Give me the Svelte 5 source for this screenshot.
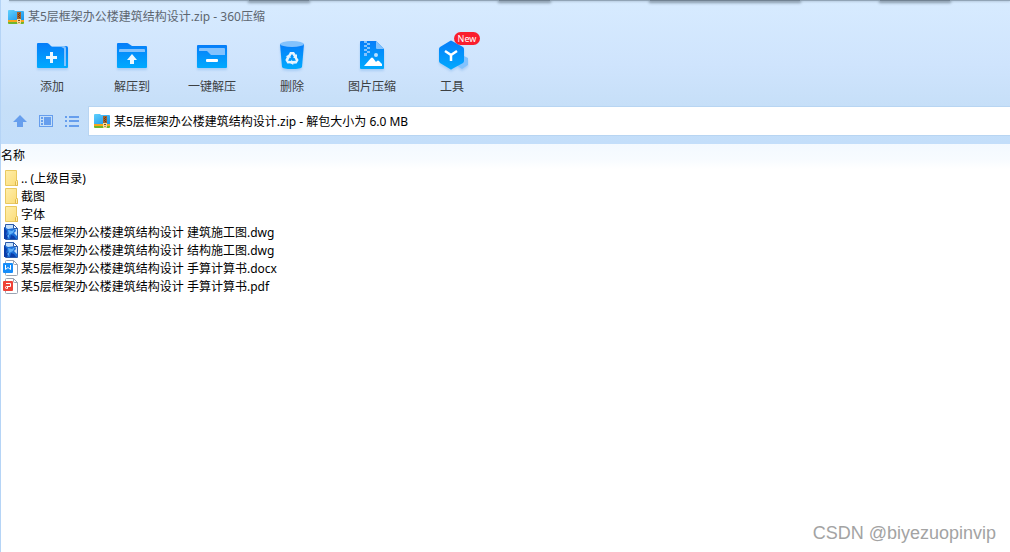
<script>
	let path = '某5层框架办公楼建筑结构设计.zip - 解包大小为 6.0 MB';

	const tools = [
		{ id: 'add', label: '添加' },
		{ id: 'extract', label: '解压到' },
		{ id: 'quick', label: '一键解压' },
		{ id: 'delete', label: '删除' },
		{ id: 'image', label: '图片压缩' },
		{ id: 'more', label: '工具', badge: 'New' }
	];

	const files = [
		{ type: 'folder', name: '.. (上级目录)' },
		{ type: 'folder', name: '截图' },
		{ type: 'folder', name: '字体' },
		{ type: 'dwg', name: '某5层框架办公楼建筑结构设计 建筑施工图.dwg' },
		{ type: 'dwg', name: '某5层框架办公楼建筑结构设计 结构施工图.dwg' },
		{ type: 'docx', name: '某5层框架办公楼建筑结构设计 手算计算书.docx' },
		{ type: 'pdf', name: '某5层框架办公楼建筑结构设计 手算计算书.pdf' }
	];
</script>

<svg class="defs" width="0" height="0" aria-hidden="true">
	<defs>
		<linearGradient id="blue" x1="0" y1="0" x2="0" y2="1">
			<stop offset="0" stop-color="#067df9" />
			<stop offset="1" stop-color="#01aafe" />
		</linearGradient>
		<linearGradient id="zipBlue" x1="0" y1="0" x2="1" y2="1">
			<stop offset="0" stop-color="#5fd0fc" />
			<stop offset="1" stop-color="#1590ec" />
		</linearGradient>
		<linearGradient id="paper" x1="0" y1="0" x2="1" y2="1">
			<stop offset="0" stop-color="#ffeeaa" />
			<stop offset="1" stop-color="#fbdc77" />
		</linearGradient>
		<symbol id="zip" viewBox="0 0 16 14">
			<path d="M0 1q0-1 1-1h5l1 1h8q1 0 1 1v9H0z" fill="url(#zipBlue)" />
			<path d="M0 10h16v2H0z" fill="#f8a51b" />
			<path d="M0 12h16v1q0 1-1 1H1q-1 0-1-1z" fill="#6fb52c" />
			<path d="M9 2h4v8H9z" fill="#a3622f" />
			<path d="M11 3h1v1h-1zM10 4h1v1h-1zM11 5h1v1h-1zM10 6h1v1h-1zM11 7h1v1h-1z" fill="#6b3b18" />
			<path d="M9 9h4v4q0 1-1 1h-2q-1 0-1-1z" fill="#f7dc9a" />
			<path d="M10 10h2v1h-2zM10.5 12h1v1h-1z" fill="#7a4a1e" />
		</symbol>
	</defs>
</svg>

<div class="window">
	<div class="edge">
		<i></i><i></i><i></i><i></i>
	</div>

	<header>
		<div class="title">
			<svg width="16" height="14"><use href="#zip" /></svg>
			<span>某5层框架办公楼建筑结构设计.zip - 360压缩</span>
		</div>

		<nav class="toolbar">
			{#each tools as tool}
				<button class="tool">
					<svg width="32" height="32" viewBox="0 0 32 32">
						{#if tool.id === 'add'}
							<path d="M14 5h16q2 0 2 2v19q0 1-1 1H14z" fill="url(#blue)" />
							<path d="M14 5h14q2 0 2 2v18h-2V8q0-1-1-1H14z" fill="#83c2fd" />
							<path d="M1 3q0-1 1-1h9q1 0 2 1l3 3h9q2 0 2 2v19H2q-1 0-1-1z" fill="url(#blue)" />
							<path d="M14 11h3v4h4v3h-4v4h-3v-4h-4v-3h4z" fill="#fff" opacity=".93" />
						{:else if tool.id === 'extract'}
							<path d="M1 3q0-1 1-1h9q1 0 2 1l3 2h14q1 0 1 1v20q0 1-1 1H2q-1 0-1-1z" fill="url(#blue)" />
							<path d="M3 11V9q0-1 1-1h24q1 0 1 1v2z" fill="#83c2fd" />
							<path d="M16 13l5 6h-3v4h-4v-4h-3z" fill="#fff" opacity=".93" />
						{:else if tool.id === 'quick'}
							<rect x="1" y="4" width="30" height="23" rx="1" fill="url(#blue)" />
							<path d="M3 10V8q0-1 1-1h24q1 0 1 1v6H15l-4-4z" fill="#83c2fd" />
							<rect x="10" y="18" width="12" height="3" rx="1" fill="#fff" />
						{:else if tool.id === 'delete'}
							<path d="M4 3h24l-2 23q-1 2-10 2T6 26z" fill="url(#blue)" />
							<ellipse cx="16" cy="3" rx="12" ry="3" fill="#83c2fd" />
							<g id="recycle" fill="#e6f4ff">
								<path d="M14 11h4l2 3 1-1v4h-4l1-1-2-3-2 3-2-1z" />
								<path d="M14 11h4l2 3 1-1v4h-4l1-1-2-3-2 3-2-1z" transform="rotate(120 16 17.500)" />
								<path d="M14 11h4l2 3 1-1v4h-4l1-1-2-3-2 3-2-1z" transform="rotate(240 16 17.500)" />
							</g>
						{:else if tool.id === 'image'}
							<path d="M4 1q0-1 1-1h15l8 8v19q0 1-1 1H5q-1 0-1-1z" fill="url(#blue)" />
							<path d="M20 0l8 8h-7q-1 0-1-1z" fill="#83c2fd" />
							<path d="M8 0h3v2H8zM11 2h3v2h-3zM8 4h3v2H8zM11 6h3v2h-3zM8 8h3v2H8zM11 10h3v2h-3zM8 12h3v3H8z" fill="#83c2fd" />
							<circle cx="20" cy="14" r="2" fill="#b9e0ff" />
							<path d="M8 25l7-8q1-1 2 0l3 4 1-1q1-1 2 0l3 3v2z" fill="#fff" />
						{:else}
							<path d="M26 14l6 3v7l-6 4-6-4v-7z" fill="#83c2fd" />
							<path d="M14 0q1-1 2 0l11 6q1 1 1 2v12q0 1-1 2l-11 6q-1 1-2 0L4 22q-1-1-1-2V8q0-1 1-2z" fill="url(#blue)" />
							<path d="M9 10l6 4 6-4M15 14v6" fill="none" stroke="#fff" stroke-width="2.5" />
						{/if}
					</svg>
					<span>{tool.label}</span>
					{#if tool.badge}
						<b class="badge">{tool.badge}</b>
					{/if}
				</button>
			{/each}
		</nav>

		<div class="address">
			<div class="nav">
				<button aria-label="上级目录">
					<svg width="14" height="14" fill="#669eed"><path d="M7 1l7 7h-4v5H4V8H0z" /></svg>
				</button>
				<button aria-label="预览">
					<svg width="14" height="14" fill="#669eed">
						<path d="M0 1h14v12H0zm1 1v10h12V2z" fill-rule="evenodd" />
						<path d="M2 3h2v2H2zM2 6h2v2H2zM2 9h2v2H2zM5 3h7v8H5z" />
					</svg>
				</button>
				<button aria-label="列表">
					<svg width="14" height="14" fill="#669eed">
						<path d="M0 2h2v2H0zM0 6h2v2H0zM0 11h2v2H0zM4 2h10v2H4zM4 6h10v2H4zM4 11h10v2H4z" />
					</svg>
				</button>
			</div>
			<label class="path">
				<svg width="16" height="14"><use href="#zip" /></svg>
				<input type="text" aria-label="路径" bind:value={path}>
			</label>
		</div>
	</header>

	<table>
		<thead>
			<tr><th>名称</th></tr>
		</thead>
		<tbody>
			{#each files as file}
				<tr>
					<td>
						<div class="file">
							<svg width="16" height="16" viewBox="0 0 16 16">
								{#if file.type === 'folder'}
									<path d="M2.5.5h11v10h1v5h-12z" fill="url(#paper)" stroke="#e9c960" />
									<path d="M12.5 15.5v-4l1-1 1 1v4z" fill="#ffeeaa" stroke="#e0b94c" />
								{:else if file.type === 'dwg'}
									<path d="M2.5.5h8l4 4v11h-12z" fill="#c5e0fb" stroke="#2c5cab" />
									<path d="M1 3l4 2 7-1 1 3-2 2 3 3v3H1z" fill="#1b6fd8" />
									<path d="M1 3l3 4-1 4 3-1-2 5H1zM8 11l3 1 2 3H7z" fill="#0a3da8" />
									<path d="M5 6l4 1 3-2-2 4-4 2zM4 12l2-2v4z" fill="#5fb0fa" />
									<path d="M10.5.5v4h4z" fill="#fff" stroke="#2c5cab" />
								{:else}
									<path d="M2.5 1.5q0-1 1-1h7l4 4v10q0 1-1 1h-10q-1 0-1-1z" fill="#fff" stroke="#9aa3b2" />
									<path d="M10.5.5v3q0 1 1 1h3" fill="none" stroke="#9aa3b2" />
									{#if file.type === 'docx'}
										<rect y="3" width="10" height="10" rx="1" fill="#168dfa" />
										<path d="M2.5 5v4.500L5 7.500l2.500 2V5" fill="none" stroke="#fff" />
									{:else}
										<rect y="3" width="10" height="10" rx="1" fill="#ee4238" />
										<path d="M3 5.500h4.500v3h-4q-1 0-1 1t1 1h1v-2" fill="none" stroke="#fff" />
									{/if}
								{/if}
							</svg>
							<span>{file.name}</span>
						</div>
					</td>
				</tr>
			{/each}
		</tbody>
	</table>

	<div class="watermark">CSDN @biyezuopinvip</div>
</div>

<style>
	:global(body) {
		margin: 0;
		background: #fff;
	}

	.defs {
		position: absolute;
	}

	.window {
		position: relative;
		box-sizing: border-box;
		min-height: 100vh;
		border-left: 1px solid #b5d4f6;
		font: 12px/18px "Noto Sans", "Noto Sans CJK SC", sans-serif;
		color: #000;
	}

	svg {
		flex: none;
		overflow: visible;
	}

	button {
		padding: 0;
		border: 0;
		background: none;
		font: inherit;
		color: inherit;
	}

	/* shadow of the window behind, along the top */
	.edge {
		position: absolute;
		top: 0;
		left: 8px;
		right: 0;
		height: 1px;
		background: #91a4b6;
		box-shadow: 0 1px 2px #a9bdd0;
	}

	.edge i {
		position: absolute;
		top: 0;
		height: 1px;
		background: #718292;
		box-shadow: 0 1px 3px 1px #8798a9;
	}

	.edge i:nth-child(1) { left: 24%; width: 6%; }
	.edge i:nth-child(2) { left: 49%; width: 5%; }
	.edge i:nth-child(3) { left: 64%; width: 15%; }
	.edge i:nth-child(4) { left: 87%; width: 7%; }

	header {
		padding-bottom: 8px;
		background: linear-gradient(#d7ebff, #cfe4fd 45%, #c6dff8 74%, #c3defa);
	}

	.title {
		display: flex;
		box-sizing: border-box;
		align-items: center;
		gap: 4px;
		height: 32px;
		padding: 2px 0 0 7px;
		color: #5d6670;
	}

	.toolbar {
		display: flex;
		height: 74px;
		padding-left: 11px;
	}

	.tool {
		position: relative;
		display: flex;
		flex-direction: column;
		align-items: center;
		gap: 4px;
		width: 80px;
		padding-top: 9px;
		color: #3c4043;
	}

	.tool svg {
		filter: drop-shadow(0 2px 1px #a9cdf5);
	}

	.tool span,
	.file span,
	.path input {
		padding: 2px 0 0;
		line-height: 16px;
	}

	.badge {
		position: absolute;
		top: 0;
		left: 42px;
		width: 26px;
		border-radius: 7px;
		background: #fa1e2d;
		color: #fff;
		font-weight: 400;
		font-size: 9px;
		line-height: 13px;
		text-align: center;
	}

	.address {
		display: flex;
		align-items: center;
	}

	.nav {
		display: flex;
		gap: 12px;
		width: 75px;
		padding-left: 12px;
	}

	.nav button {
		display: flex;
	}

	.path {
		display: flex;
		flex: 1;
		align-items: center;
		gap: 4px;
		height: 28px;
		padding-left: 5px;
		border: 1px solid #b8d5f2;
		border-right: 0;
		background: #fff;
	}

	.path input {
		flex: 1;
		min-width: 0;
		border: 0;
		outline: 0;
		background: none;
		font: inherit;
		color: #000;
	}

	table {
		width: 100%;
		border-collapse: collapse;
	}

	th {
		height: 22px;
		padding: 1px 0 2px;
		background: linear-gradient(#f3f9ff, #f7fbff 60%, #fff);
		font-weight: 400;
		text-align: left;
	}

	td {
		padding: 0;
	}

	.file {
		display: flex;
		align-items: center;
		gap: 2px;
		height: 18px;
		padding-left: 2px;
		white-space: nowrap;
	}

	.watermark {
		position: absolute;
		right: 14px;
		bottom: 8px;
		font: 18px/22px "Liberation Sans", Arial, sans-serif;
		color: #a3a3a3;
	}
</style>
